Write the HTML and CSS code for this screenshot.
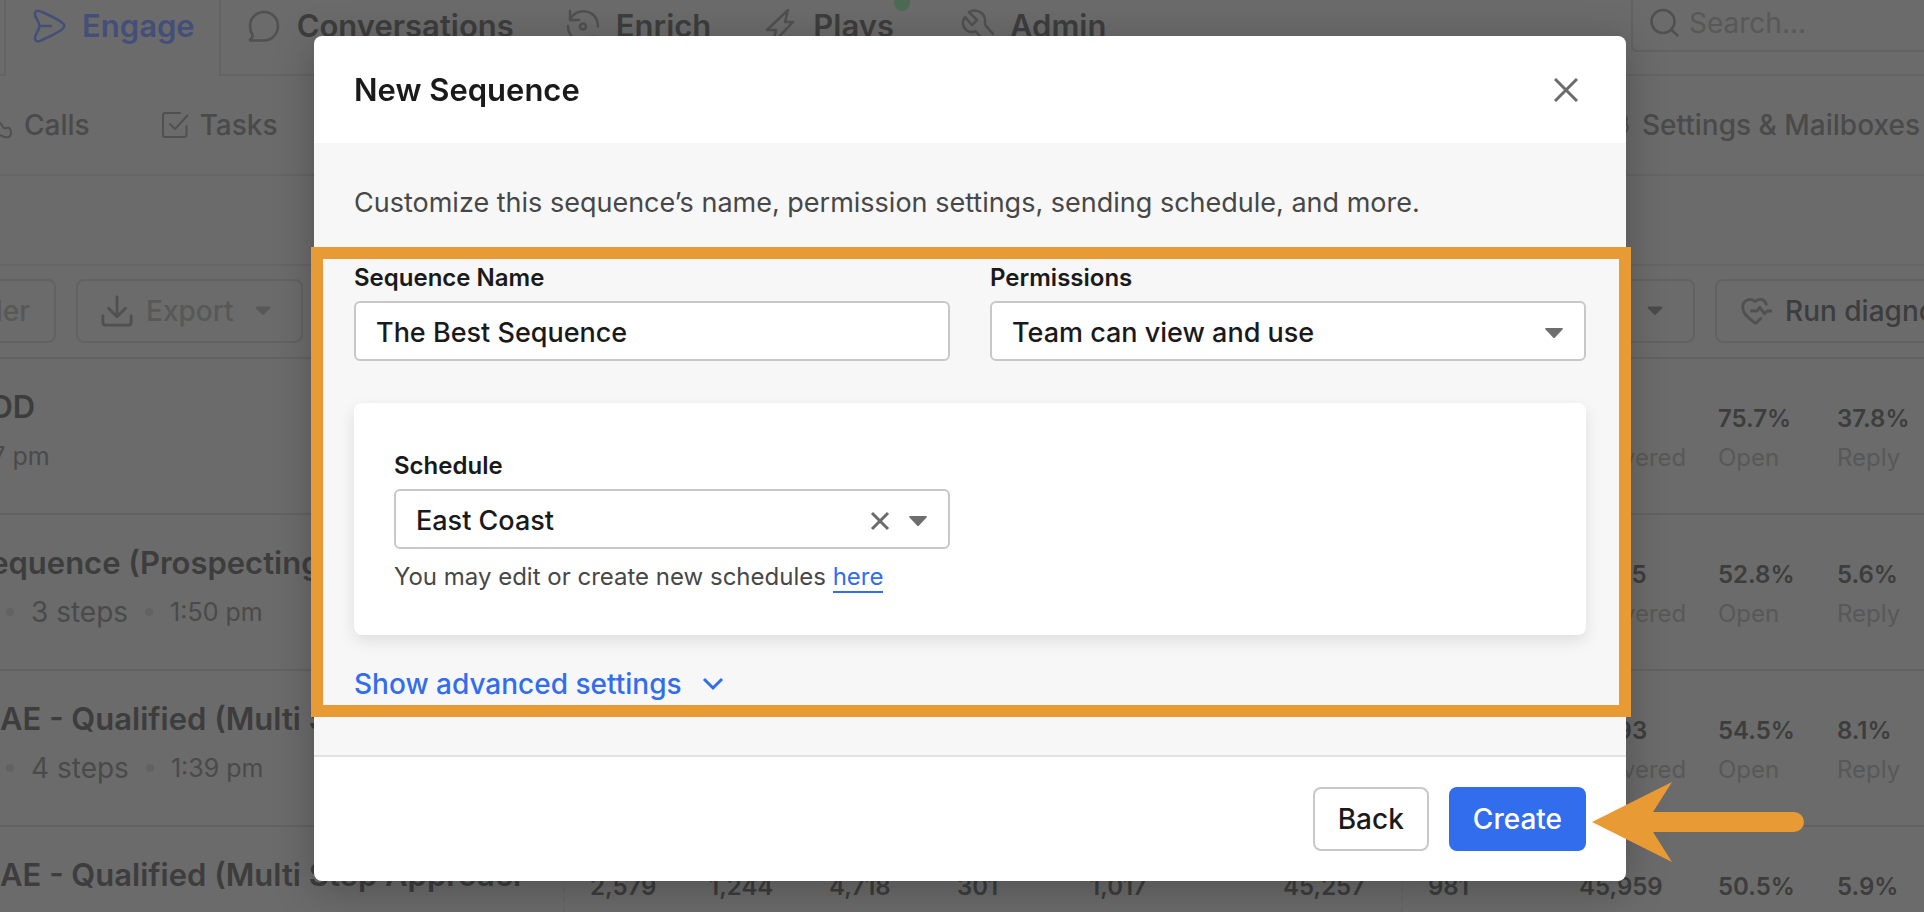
FILE: index.html
```html
<!DOCTYPE html>
<html lang="en">
<head>
<meta charset="utf-8">
<title>New Sequence</title>
<link rel="stylesheet" href="styles.css">
</head>
<body>
<div class="page">
  <header class="topbar">
    <nav class="tabs">
      <a class="tab tab-active" href="#">
        <svg class="icon" viewBox="0 0 34 34"><path d="M3 4C4 .5 7 1.500 10 3c8 3.500 15 7 20 10.500 3 2 3 5 0 7C25 24 18 27.500 10 31c-3 1.500-6 2.500-7-1-1-4 4.500-8.500 4.500-13S2 8 3 4ZM8 17h11"/></svg>
        Engage</a>
      <a class="tab" href="#">
        <svg class="icon" viewBox="0 0 34 34"><path d="M17 3c8 0 14 6.500 14 14s-6 14.500-14 14.500H4c-1.500 0-1.500-1 0-2 1.500-1 2-2 1.500-3.500C4 23.500 3 20 3 17 3 9.500 9 3 17 3Z"/></svg>
        Conversations</a>
      <a class="tab" href="#">
        <svg class="icon" viewBox="0 0 34 34"><path d="M4 2v9h9M4 10C8 4 14 1.500 20 2.500c7 1 12 7 12 15M2 17c0 8 5 13 11 14.500M31 35v-7h-9M30 28c-1 2-3 4-5 5"/><circle cx="17" cy="17.500" r="3"/></svg>
        Enrich</a>
      <a class="tab" href="#">
        <svg class="icon" viewBox="0 0 34 34"><path d="M25 1 4 21h9l-3 13 20-21h-8Z"/></svg>
        <span class="tab-label">Plays<span class="dot-new"></span></span></a>
      <a class="tab" href="#">
        <svg class="icon" viewBox="0 0 34 34"><path d="M9 3l8 8-5 5-7-8c-5 6 0 16 8 15 3-1 3-1 4 1l7 8M9 3c7-4 17 1 16 10 0 3 0 3 2 5l6 7"/></svg>
        Admin</a>
    </nav>
    <label class="search">
      <svg class="icon" viewBox="0 0 34 34"><circle cx="16" cy="15.500" r="11.500"/><path d="m24.500 24 6 5.500"/></svg>
      <input type="search" placeholder="Search..." aria-label="Search">
    </label>
  </header>

  <nav class="subnav">
    <a class="sublink" href="#">
      <svg class="icon-sm" viewBox="0 0 28 28"><path d="M7 3C3 4 2 7 4 11c2 5 8 12 14 14 4 2 8 2 9-2 0-3 0-5-2-6s-3 1-5 0-2-4-5-6c-2-1-2-3-3-5S9 2 7 3Z"/></svg>
      Calls</a>
    <a class="sublink" href="#">
      <svg class="icon-sm" viewBox="0 0 28 28"><path d="M20 2H5.500C4 2 3 3 3 4.500v19C3 25 4 26 5.500 26H24c1.500 0 2.500-1 2.500-2.500V15M10 13l5 5L28 4"/></svg>
      Tasks</a>
    <a class="sublink sublink-end" href="#">
      <svg class="icon-sm" viewBox="0 0 28 28"><path d="m11 3 1-2h4l1 3 3 1 3-1 2 4-1 3 1 3 1 3-2 4-4-1-3 2-1 3h-4l-1-3-3-2-4 1-2-4 2-3v-3L2 9l2-4 4 1Z"/><circle cx="14" cy="14" r="4"/></svg>
      Settings &amp; Mailboxes</a>
  </nav>

  <div class="spacer"></div>

  <div class="toolbar">
    <button class="tool tool-muted" type="button">Folder</button>
    <button class="tool tool-muted" type="button">
      <svg class="icon-tool" viewBox="0 0 34 34"><path d="M17 2v21M8 14l9 9 9-9M2 22v7c0 2 1 3 3 3h24c2 0 3-1 3-3v-7"/></svg>
      Export
      <svg class="caret" viewBox="0 0 18 10"><path d="M2 0h14q2 0 1 2l-7 7q-1 1-2 0L1 2Q0 0 2 0Z"/></svg>
    </button>
    <button class="tool tool-end" type="button">Sort
      <svg class="caret" viewBox="0 0 18 10"><path d="M2 0h14q2 0 1 2l-7 7q-1 1-2 0L1 2Q0 0 2 0Z"/></svg>
    </button>
    <button class="tool tool-run" type="button">
      <svg class="icon-tool" viewBox="0 0 34 34"><path d="M28 10c-2-6-8-7-12-3-5-5-14-1-13 7 0 6 6 10 12 15 1 1 2 1 3 0l4-4M12 17h6l3-4 5 7 3-3h4"/></svg>
      Run diagnostics</button>
  </div>

  <table class="rows">
    <colgroup>
      <col><col class="c120"><col class="c120"><col class="c128"><col class="c133"><col class="c193"><col class="c144"><col class="c152"><col class="c139"><col class="c119"><col class="c112">
    </colgroup>
    <tbody>
      <tr>
        <th scope="row"><span class="name">BDD</span><span class="meta meta-time">27 pm</span></th>
        <td class="dashed"></td><td></td><td></td><td></td><td></td><td></td>
        <td class="dashed"></td>
        <td><b></b><span>Delivered</span></td><td><b>75.7%</b><span>Open</span></td><td><b>37.8%</b><span>Reply</span></td>
      </tr>
      <tr>
        <th scope="row"><span class="name">Sequence (Prospecting)</span><span class="meta meta-steps"><i></i>3 steps<i></i><small>1:50 pm</small></span></th>
        <td class="dashed"></td><td></td><td></td><td></td><td></td><td></td>
        <td class="dashed"></td>
        <td><b>2,855</b><span>Delivered</span></td><td><b>52.8%</b><span>Open</span></td><td><b>5.6%</b><span>Reply</span></td>
      </tr>
      <tr>
        <th scope="row"><span class="name name-inset">AE - Qualified (Multi Step Approach)</span><span class="meta meta-steps"><i></i>4 steps<i></i><small>1:39 pm</small></span></th>
        <td class="dashed"></td><td></td><td></td><td></td><td></td><td></td>
        <td class="dashed"></td>
        <td><b>4,893</b><span>Delivered</span></td><td><b>54.5%</b><span>Open</span></td><td><b>8.1%</b><span>Reply</span></td>
      </tr>
      <tr>
        <th scope="row"><span class="name name-inset">AE - Qualified (Multi Step Approach)</span></th>
        <td class="dashed"><b>2,579</b></td><td><b>1,244</b></td><td><b>4,718</b></td><td><b>301</b></td><td><b>1,017</b></td><td><b>45,257</b></td>
        <td class="dashed"><b>981</b></td>
        <td><b>45,959</b></td><td><b>50.5%</b></td><td><b>5.9%</b></td>
      </tr>
    </tbody>
  </table>
</div>

<div class="backdrop">
  <form class="modal" role="dialog" aria-labelledby="dialog-title">
    <header class="modal-head">
      <h1 id="dialog-title">New Sequence</h1>
      <button class="close" type="button" aria-label="Close"><svg viewBox="0 0 24 24"><path d="m1 1 22 22M23 1 1 23"/></svg></button>
    </header>
    <div class="modal-body">
      <p class="intro">Customize this sequence’s name, permission settings, sending schedule, and more.</p>
      <div class="fields">
        <div class="field">
          <label for="seq-name">Sequence Name</label>
          <input class="control" id="seq-name" type="text" value="The Best Sequence">
        </div>
        <div class="field">
          <label for="permissions">Permissions</label>
          <div class="picker">
            <select class="control" id="permissions"><option>Team can view and use</option></select>
            <svg class="caret picker-caret" viewBox="0 0 18 10"><path d="M1 0h16q1.500 0 .5 1.500L10 9.500q-1 1-2 0L.5 1.500Q-.5 0 1 0Z"/></svg>
          </div>
        </div>
      </div>
      <section class="card">
        <div class="field schedule">
          <label for="schedule">Schedule</label>
          <div class="picker">
            <select class="control" id="schedule"><option>East Coast</option></select>
            <button class="clear" type="button" aria-label="Clear schedule"><svg viewBox="0 0 20 20"><path d="m2 2 16 16M18 2 2 18"/></svg></button>
            <svg class="caret picker-caret" viewBox="0 0 18 10"><path d="M1 0h16q1.500 0 .5 1.500L10 9.500q-1 1-2 0L.5 1.500Q-.5 0 1 0Z"/></svg>
          </div>
        </div>
        <p class="hint">You may edit or create new schedules <a href="#">here</a></p>
      </section>
      <button class="advanced" type="button">Show advanced settings
        <svg viewBox="0 0 22 14"><path d="m2 2 9 9 9-9"/></svg>
      </button>
      <span class="highlight"></span>
    </div>
    <footer class="modal-foot">
      <button class="btn btn-plain" type="button">Back</button>
      <button class="btn btn-primary" type="submit">Create</button>
      <svg class="pointer" viewBox="0 0 212 80"><path d="M0 40 80 0 61 30H202a10 10 0 0 1 0 20H61L80 80Z"/></svg>
    </footer>
  </form>
</div>
</body>
</html>
```
FILE: styles.css
```css
:root {
  --bg: #6b6b6b;
  --line: #626262;
  --ink: #3d3d3d;
  --ink-mid: #4a4a4a;
  --ink-soft: #585858;
  --orange: #e89a35;
  --blue: #326dee;
}
* { box-sizing: border-box; }
body {
  margin: 0;
  height: 100vh;
  overflow: hidden;
  font-family: Inter, "Liberation Sans", sans-serif;
  background: var(--bg);
  color: var(--ink);
}
a { color: inherit; text-decoration: none; }
button, input, select { font: inherit; color: inherit; }
svg { flex: none; }

/* Page behind the dialog */
.icon, .icon-sm, .icon-tool {
  width: 34px;
  height: 34px;
  fill: none;
  stroke: #505050;
  stroke-width: 2.5;
  stroke-linecap: round;
  stroke-linejoin: round;
}
.icon-sm { width: 28px; height: 28px; stroke-width: 2; }
.icon-tool { width: 32px; height: 32px; stroke-width: 3; }
.caret { width: 18px; height: 10px; fill: var(--ink-mid); }
.page { height: 100vh; overflow: hidden; }
.topbar {
  display: flex;
  justify-content: space-between;
  height: 76px;
  border-bottom: 2px solid #646464;
}
.tabs { display: flex; margin-left: 4px; }
.tab {
  display: flex;
  align-items: center;
  gap: 16px;
  height: 76px;
  padding: 0 26px 25px;
  font-size: 31px;
  font-weight: 600;
}
.tab-active {
  padding: 0 24px 25px 26px;
  background: var(--bg);
  border: solid #646464;
  border-width: 0 2px;
  color: #434f78;
}
.tab-active .icon { stroke: #434f78; }
.tab-label { position: relative; margin-right: 14px; }
.dot-new {
  position: absolute;
  right: -16px;
  top: -12px;
  width: 16px;
  height: 16px;
  border-radius: 50%;
  background: #4c6a54;
}
.search {
  display: flex;
  align-items: center;
  gap: 8px;
  width: 293px;
  height: 52px;
  padding: 0 0 4px 14px;
  border: solid var(--line);
  border-width: 0 0 2px 2px;
  border-radius: 0 0 0 6px;
}
.search input {
  width: 200px;
  padding: 0;
  border: 0;
  background: none;
  font-size: 28px;
}
.search input::placeholder { color: var(--ink-soft); }
.subnav {
  display: flex;
  align-items: center;
  height: 100px;
  border-bottom: 2px solid #656565;
  font-size: 28px;
  font-weight: 500;
  color: var(--ink-mid);
}
.sublink { display: flex; align-items: center; gap: 12px; }
.sublink:first-child { margin-left: -16px; }
.sublink + .sublink { margin-left: 70px; }
.subnav .sublink-end { margin: 0 4px 0 auto; }
.spacer { height: 88px; }
.toolbar {
  display: flex;
  gap: 20px;
  height: 93px;
  margin: 0 -140px 0 -80px;
  padding-top: 13px;
  border-top: 2px solid #656565;
  font-size: 28px;
  font-weight: 500;
}
.tool {
  display: flex;
  align-items: center;
  gap: 13px;
  height: 64px;
  padding: 0 30px 0 23px;
  border: 2px solid var(--line);
  border-radius: 8px;
  background: none;
}
.tool-muted { color: var(--ink-soft); }
.tool-muted:first-child { width: 136px; justify-content: flex-end; padding-right: 24px; }
.tool .caret { width: 16px; margin-left: 8px; }
.tool-muted .caret { fill: var(--ink-soft); }
.tool-end { margin-left: auto; }
.tool-run { width: 349px; }
.rows {
  width: calc(100% + 30px);
  margin-left: -30px;
  table-layout: fixed;
  border-collapse: collapse;
}
.c120 { width: 120px; }
.c128 { width: 128px; }
.c133 { width: 133px; }
.c193 { width: 193px; }
.c144 { width: 144px; }
.c152 { width: 152px; }
.c139 { width: 139px; }
.c119 { width: 119px; }
.c112 { width: 112px; }
.rows th, .rows td {
  height: 156px;
  padding: 0;
  border-top: 2px solid var(--line);
  text-align: left;
  vertical-align: top;
}
.rows th { padding: 26px 40px 0 0; }
.rows td { padding: 40px 0 0 25px; font-size: 24px; line-height: 39px; }
.rows .dashed { border-left: 2px dashed #666; }
.rows td b, .rows td span { display: block; min-height: 39px; }
.rows td b { font-weight: 600; }
.rows td span { color: var(--ink-soft); }
.name {
  display: block;
  overflow: hidden;
  white-space: nowrap;
  font-size: 31px;
  font-weight: 600;
  line-height: 44px;
}
.name-inset { padding-left: 30px; }
.meta {
  display: flex;
  align-items: center;
  gap: 17px;
  height: 54px;
  padding-left: 6px;
  font-size: 28px;
  font-weight: 400;
  color: var(--ink-mid);
}
.meta small, .meta-time { font-size: 25px; }
.meta-steps { padding-left: 36px; }
.meta i { width: 8px; height: 8px; border-radius: 50%; background: #626262; }

/* Dialog */
.backdrop {
  position: fixed;
  inset: 0;
  padding: 36px 298px 0 314px;
}
.modal {
  border-radius: 8px;
  background: #fff;
  box-shadow: 0 8px 40px rgba(0, 0, 0, .25);
  color: #1a1a1a;
}
.modal-head {
  display: flex;
  align-items: center;
  justify-content: space-between;
  height: 107px;
  padding: 0 48px 0 40px;
}
.modal-head h1 { margin: 0; font-size: 31px; font-weight: 600; }
.close, .clear, .advanced { padding: 0; border: 0; background: none; }
.close svg, .clear svg, .advanced svg {
  display: block;
  fill: none;
  stroke: #6b6b6b;
  stroke-width: 3;
}
.close svg { width: 24px; height: 24px; }
.modal-body {
  position: relative;
  padding: 40px 40px 51px;
  background: #f7f7f7;
}
.intro { margin: 0 0 38px; font-size: 27px; line-height: 40px; color: #474747; }
.fields { display: grid; grid-template-columns: 1fr 1fr; gap: 40px; }
.field { display: flex; flex-direction: column; gap: 6px; }
.field label { font-size: 24px; font-weight: 600; line-height: 34px; }
.control {
  width: 100%;
  height: 60px;
  padding: 2px 20px 0;
  border: 2px solid #c8c8c8;
  border-radius: 6px;
  background: #fff;
  font-size: 27px;
  font-weight: 500;
  appearance: none;
}
.picker { position: relative; }
.picker-caret {
  position: absolute;
  right: 23px;
  top: 27px;
  fill: #6e6e6e;
  pointer-events: none;
}
.clear { position: absolute; right: 60px; top: 22px; }
.clear svg { width: 20px; height: 20px; }
.card {
  margin-top: 42px;
  padding: 46px 40px 40px;
  border-radius: 8px;
  background: #fff;
  box-shadow: 0 6px 16px rgba(0, 0, 0, .1);
}
.schedule { width: calc(50% - 20px); }
.hint { margin: 10px 0 0; font-size: 24px; line-height: 36px; color: #474747; }
.hint a { border-bottom: 2px solid var(--blue); color: var(--blue); }
.advanced {
  display: flex;
  align-items: center;
  gap: 20px;
  margin-top: 29px;
  font-size: 28px;
  font-weight: 500;
  line-height: 40px;
  color: var(--blue);
}
.advanced svg { width: 22px; height: 14px; stroke: var(--blue); }
.highlight {
  position: absolute;
  inset: 104px -5px 38px -3px;
  border: 12px solid var(--orange);
  pointer-events: none;
}
.modal-foot {
  position: relative;
  display: flex;
  justify-content: flex-end;
  gap: 20px;
  padding: 30px 40px;
  border-top: 2px solid #e2e2e2;
}
.btn {
  height: 64px;
  padding: 0 23px;
  border: 2px solid #c8c8c8;
  border-radius: 8px;
  background: #fff;
  font-size: 28px;
  font-weight: 500;
}
.btn-primary { padding: 0 22px; border-color: var(--blue); background: var(--blue); color: #fff; }
.pointer {
  position: absolute;
  right: -178px;
  top: 25px;
  width: 212px;
  height: 80px;
  fill: var(--orange);
}
```
